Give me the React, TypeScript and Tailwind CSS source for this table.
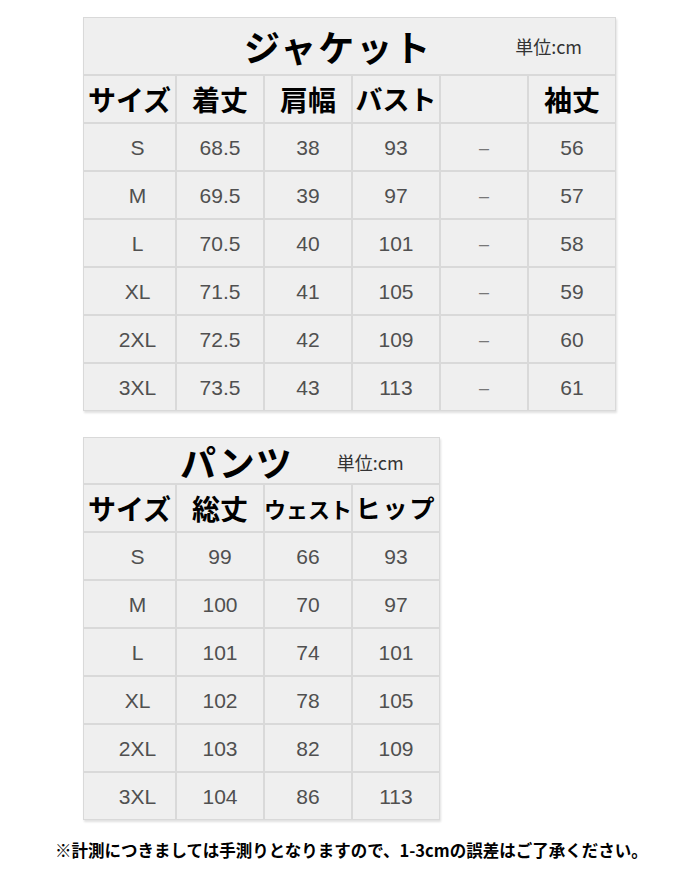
import React from 'react';

const sizes = ['S', 'M', 'L', 'XL', '2XL', '3XL'];

// ジャケット
const jacketRows = [
  ['68.5', '38', '93', '–', '56'],
  ['69.5', '39', '97', '–', '57'],
  ['70.5', '40', '101', '–', '58'],
  ['71.5', '41', '105', '–', '59'],
  ['72.5', '42', '109', '–', '60'],
  ['73.5', '43', '113', '–', '61'],
];

// パンツ
const pantsRows = [
  ['99', '66', '93'],
  ['100', '70', '97'],
  ['101', '74', '101'],
  ['102', '78', '105'],
  ['103', '82', '109'],
  ['104', '86', '113'],
];

const Head = ({ children, size = 'text-[28px]' }: { children: React.ReactNode; size?: string }) => (
  <div
    className={`bg-[#efefef] h-[46px] flex items-center justify-center whitespace-nowrap font-bold text-black font-['Noto_Sans_CJK_JP',sans-serif] ${size}`}
  >
    {children}
  </div>
);

const Cell = ({ children, first = false }: { children: React.ReactNode; first?: boolean }) => (
  <div
    className={`bg-[#efefef] h-[46px] flex items-center justify-center pt-[2px] text-[21px] text-[#505050] font-['Liberation_Sans',Arial,sans-serif] ${first ? 'pl-[16px]' : ''}`}
  >
    {children}
  </div>
);

export default function App() {
  return (
    <div className="w-[700px] min-h-[879px] bg-white pt-[17px] pl-[83px]">
      {/* jacket */}
      <div className="w-[533px] grid grid-cols-[91px_86px_86px_86px_86px_86px] gap-[2px] p-[1px] bg-[#d9d9d9] shadow-[1px_2px_2px_rgba(0,0,0,0.12)]">
        <div className="col-span-6 bg-[#efefef] h-[56px] flex items-center pl-[160px] pr-[33px]">
          <span className="text-[36px] font-bold tracking-[2px] text-black leading-none font-['Noto_Sans_CJK_JP',sans-serif]">
            ジャケット
          </span>
          <span className="ml-auto text-[18px] text-[#333] font-['Noto_Sans_CJK_JP',sans-serif]">単位:cm</span>
        </div>
        <Head>サイズ</Head>
        <Head>着丈</Head>
        <Head>肩幅</Head>
        <Head size="text-[27px]">バスト</Head>
        <Head>{''}</Head>
        <Head>袖丈</Head>
        {jacketRows.map((r, i) => (
          <React.Fragment key={sizes[i]}>
            <Cell first>{sizes[i]}</Cell>
            {r.map((v, j) => (
              <Cell key={j}>{j === 3 ? <span className="text-[#777] text-[18px]">{v}</span> : v}</Cell>
            ))}
          </React.Fragment>
        ))}
      </div>

      {/* pants */}
      <div className="mt-[26px] w-[357px] grid grid-cols-[91px_86px_86px_86px] gap-[2px] p-[1px] bg-[#d9d9d9] shadow-[1px_2px_2px_rgba(0,0,0,0.12)]">
        <div className="col-span-4 bg-[#efefef] h-[45px] flex items-center pl-[96px]">
          <span className="text-[36px] font-bold tracking-[1px] text-black leading-none font-['Noto_Sans_CJK_JP',sans-serif]">
            パンツ
          </span>
          <span className="ml-[44px] mt-[4px] text-[18px] text-[#333] font-['Noto_Sans_CJK_JP',sans-serif]">単位:cm</span>
        </div>
        <Head>サイズ</Head>
        <Head>総丈</Head>
        <Head size="text-[22px]">ウェスト</Head>
        <Head size="text-[25px] tracking-[2px]">ヒップ</Head>
        {pantsRows.map((r, i) => (
          <React.Fragment key={sizes[i]}>
            <Cell first>{sizes[i]}</Cell>
            {r.map((v, j) => (
              <Cell key={j}>{v}</Cell>
            ))}
          </React.Fragment>
        ))}
      </div>

      <p className="mt-[18px] -ml-[28px] text-[16.5px] font-bold text-black whitespace-nowrap font-['Noto_Sans_CJK_JP',sans-serif]">
        ※計測につきましては手測りとなりますので、1-3cmの誤差はご了承ください。
      </p>
    </div>
  );
}
